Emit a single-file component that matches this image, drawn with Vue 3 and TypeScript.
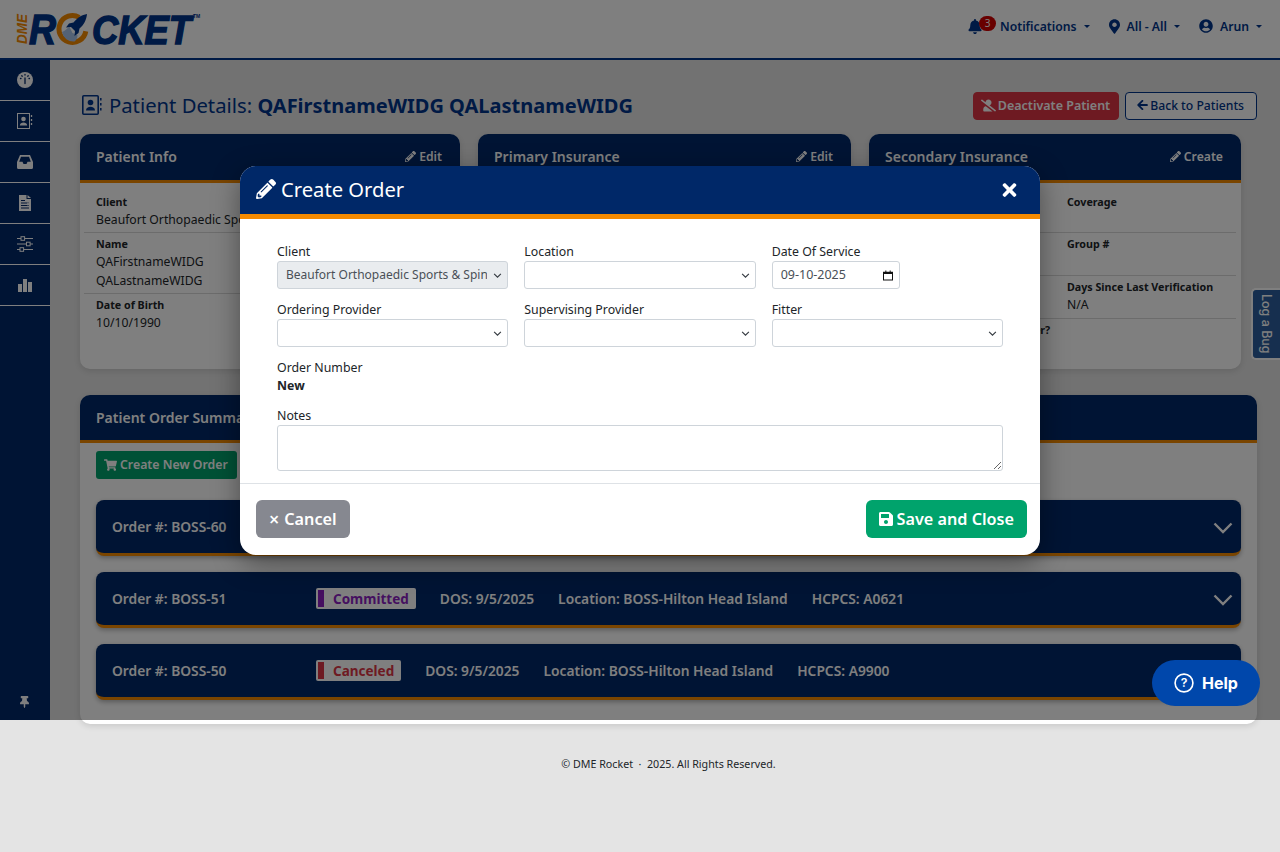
<script setup lang="ts">
const navIcons = ['gauge', 'contacts', 'inbox', 'file', 'sliders', 'bars']

const patientRows = [
  { label: 'Client', value: ['Beaufort Orthopaedic Sports & Spine'] },
  { label: 'Name', value: ['QAFirstnameWIDG', 'QALastnameWIDG'] },
  { label: 'Date of Birth', value: ['10/10/1990'] },
]

const secondaryRows = [
  { left: 'Payer', right: 'Coverage', value: '' },
  { left: 'Policy #', right: 'Group #', value: '' },
  { left: 'Last Verified', right: 'Days Since Last Verification', value: 'N/A' },
  { left: 'Is Medicare a Secondary Payer?', right: '', value: '' },
]

const orders = [
  { id: 'BOSS-60', status: 'Committed', tone: 'purple', hcpcs: 'A0621' },
  { id: 'BOSS-51', status: 'Committed', tone: 'purple', hcpcs: 'A0621' },
  { id: 'BOSS-50', status: 'Canceled', tone: 'red', hcpcs: 'A9900' },
]

const pencil = 'M497.9 142.1l-46.1 46.1c-4.7 4.7-12.3 4.7-17 0l-111-111c-4.7-4.7-4.7-12.3 0-17l46.1-46.1c18.7-18.7 49.1-18.7 67.9 0l60.1 60.1c18.8 18.7 18.8 49.1 0 67.9zM284.2 99.8L21.6 362.4.4 483.9c-2.9 16.4 11.4 30.6 27.8 27.8l121.5-21.3 262.6-262.6c4.7-4.7 4.7-12.3 0-17l-111-111c-4.8-4.7-12.4-4.7-17.1 0zM124.1 339.9c-5.5-5.5-5.5-14.3 0-19.8l154-154c5.5-5.5 14.3-5.5 19.8 0s5.5 14.3 0 19.8l-154 154c-5.5 5.5-14.3 5.5-19.8 0zM88 424h48v36.3l-64.5 11.3-31.1-31.1L51.7 376H88v48z'
const times = 'M242.72 256l100.07-100.07c12.28-12.28 12.28-32.19 0-44.48l-22.24-22.24c-12.28-12.28-32.19-12.28-44.48 0L176 189.28 75.93 89.21c-12.28-12.28-32.19-12.28-44.48 0L9.21 111.45c-12.28 12.28-12.28 32.19 0 44.48L109.28 256 9.21 356.07c-12.28 12.28-12.28 32.19 0 44.48l22.24 22.24c12.28 12.28 32.2 12.28 44.48 0L176 322.72l100.07 100.07c12.28 12.28 32.2 12.28 44.48 0l22.24-22.24c12.28-12.28 12.28-32.19 0-44.48L242.72 256z'
const floppy = 'M433.941 129.941l-83.882-83.882A48 48 0 0 0 316.118 32H48C21.49 32 0 53.49 0 80v352c0 26.51 21.49 48 48 48h352c26.51 0 48-21.49 48-48V163.882a48 48 0 0 0-14.059-33.941zM224 416c-35.346 0-64-28.654-64-64 0-35.346 28.654-64 64-64s64 28.654 64 64c0 35.346-28.654 64-64 64zm96-304.52V212c0 6.627-5.373 12-12 12H76c-6.627 0-12-5.373-12-12V108c0-6.627 5.373-12 12-12h228.52c3.183 0 6.235 1.264 8.485 3.515l3.48 3.48A11.996 11.996 0 0 1 320 111.48z'
</script>

<template>
  <div class="page">
    <header class="topbar">
      <svg class="logo" viewBox="0 0 186 36" width="186" height="36">
        <text class="logo-dme" transform="translate(13 33) rotate(-90)" textLength="30" lengthAdjust="spacingAndGlyphs">DME</text>
        <text class="logo-big" x="15" y="33" textLength="27" lengthAdjust="spacingAndGlyphs">R</text>
        <path d="M65.25 6.3A13.5 13.5 0 1 0 71.8 20.3" fill="none" stroke="#f58a00" stroke-width="5" />
        <path d="M48 21c3-1 5.500-4 7.500-5l3 6 5 2c0 3-1 5-3 6.500a11.500 11.500 0 0 1-12.500-9.500z" fill="#a9c4ea" />
        <path d="M73 3c-5 .8-10 4-13.500 8.500l-4.500 1-3 4 5-.5 4 4-.5 5 4-3 1-4.500C70 14 72.500 8.500 73 3z" fill="#00348a" />
        <text class="logo-cket" transform="translate(78 33) scale(1 1.14)">CKET</text>
        <text class="logo-tm" x="179" y="6.500">TM</text>
      </svg>

      <nav class="topnav">
        <a class="topnav-item">
          <span class="bell">
            <svg viewBox="0 0 448 512" width="14" height="15"><path fill="currentColor" d="M224 512c35.32 0 63.97-28.65 63.97-64H160.03c0 35.35 28.65 64 63.97 64zm215.39-149.71c-19.32-20.76-55.47-51.99-55.47-154.29 0-77.7-54.48-139.9-127.94-155.16V32c0-17.67-14.32-32-31.98-32s-31.98 14.33-31.98 32v20.84C118.56 68.1 64.08 130.3 64.08 208c0 102.3-36.15 133.53-55.47 154.29-6 6.45-8.66 14.16-8.61 21.71.11 16.4 12.98 32 32.1 32h383.8c19.12 0 32-15.6 32.1-32 .05-7.55-2.61-15.27-8.61-21.71z" /></svg>
            <span class="badge-count">3</span>
          </span>
          Notifications<i class="caret"></i>
        </a>
        <a class="topnav-item">
          <svg viewBox="0 0 384 512" width="11" height="15"><path fill="currentColor" d="M172.268 501.67C26.97 291.031 0 269.413 0 192 0 85.961 85.961 0 192 0s192 85.961 192 192c0 77.413-26.97 99.031-172.268 309.67-9.535 13.774-29.93 13.773-39.464 0zM192 272c44.183 0 80-35.817 80-80s-35.817-80-80-80-80 35.817-80 80 35.817 80 80 80z" /></svg>
          All - All<i class="caret"></i>
        </a>
        <a class="topnav-item">
          <svg viewBox="0 0 496 512" width="14" height="14"><path fill="currentColor" d="M248 8C111 8 0 119 0 256s111 248 248 248 248-111 248-248S385 8 248 8zm0 96c48.600 0 88 39.400 88 88s-39.400 88-88 88-88-39.400-88-88 39.400-88 88-88zm0 344c-58.700 0-111.300-26.600-146.500-68.200 18.800-35.400 55.600-59.800 98.500-59.800 2.400 0 4.800.4 7.100 1.100 13 4.200 26.600 6.900 40.900 6.900 14.300 0 28-2.700 40.900-6.900 2.300-.7 4.700-1.100 7.100-1.100 42.900 0 79.700 24.400 98.500 59.800C359.300 421.400 306.700 448 248 448z" /></svg>
          Arun<i class="caret"></i>
        </a>
      </nav>
    </header>

    <div class="shell">
      <aside class="sidebar">
        <div v-for="icon in navIcons" :key="icon" class="nav-cell">
          <svg v-if="icon === 'gauge'" viewBox="0 0 16 16" width="16" height="16">
            <circle cx="8" cy="8" r="8" fill="#fff" />
            <g stroke="#002868" stroke-width="1.300" stroke-linecap="round">
              <path d="M8 2.500v.6M3.500 6.500h.5M12 6.500h.5M4.800 3.800l.4.4M11.200 3.800l-.4.4M8 6l0 5.500" />
            </g>
          </svg>
          <svg v-else-if="icon === 'contacts'" viewBox="0 0 16 16" width="16" height="16">
            <rect x=".5" y=".5" width="12" height="15" fill="none" stroke="#fff" />
            <circle cx="6.500" cy="6" r="2.300" fill="#fff" />
            <path d="M2.800 12.500c0-4 7.400-4 7.400 0z" fill="#fff" />
            <path d="M14.500 2v2M14.500 6v2M14.500 10v2" stroke="#fff" stroke-width="1.300" />
          </svg>
          <svg v-else-if="icon === 'inbox'" viewBox="0 0 16 14" width="16" height="14">
            <path fill="#fff" fill-rule="evenodd" d="M3 0h10l3 7v5.500a1.500 1.500 0 0 1-1.500 1.500h-13A1.500 1.500 0 0 1 0 12.500V7zM4 1.800L2.200 6.800h3.300l1 2.200h3l1-2.200h3.300L12 1.800z" />
          </svg>
          <svg v-else-if="icon === 'file'" viewBox="0 0 12 16" width="12" height="16">
            <path d="M0 0h7.500v4H12v12H0z" fill="#fff" />
            <path d="M8.500 0L12 3H8.500z" fill="#fff" />
            <path d="M2 5.500h4M2 8h8M2 10.500h8M2 13h8" stroke="#002868" stroke-width="1" fill="none" />
            <path d="M9 7.500v3" stroke="#fff" stroke-width="1.500" />
          </svg>
          <svg v-else-if="icon === 'sliders'" viewBox="0 0 16 16" width="16" height="16">
            <path d="M0 2.500h16M0 8h16M0 13.500h16" stroke="#fff" stroke-width="1.200" />
            <rect x="4" y=".7" width="3.600" height="3.600" fill="#002868" stroke="#fff" />
            <rect x="9.500" y="6.200" width="3.600" height="3.600" fill="#002868" stroke="#fff" />
            <rect x="3" y="11.700" width="3.600" height="3.600" fill="#002868" stroke="#fff" />
          </svg>
          <svg v-else viewBox="0 0 14 14" width="14" height="14">
            <path d="M0 6h4v8H0zM5 1h4v13H5zM10 4h4v10h-4z" fill="#fff" />
          </svg>
        </div>
        <div class="pin">
          <svg viewBox="0 0 384 512" width="9" height="12"><path fill="#fff" d="M298.028 214.267L285.793 96H328c13.255 0 24-10.745 24-24V24c0-13.255-10.745-24-24-24H56C42.745 0 32 10.745 32 24v48c0 13.255 10.745 24 24 24h42.207L85.972 214.267C37.465 236.82 0 277.261 0 328c0 13.255 10.745 24 24 24h136v104.007c0 1.242.289 2.467.845 3.578l24 48c2.941 5.882 11.364 5.893 14.311 0l24-48a8.008 8.008 0 0 0 .845-3.578V352h136c13.255 0 24-10.745 24-24-.001-51.183-37.983-91.420-85.973-113.733z" /></svg>
        </div>
      </aside>

      <main class="content">
        <div class="title-row">
          <h1 class="title">
            <svg class="title-icon" viewBox="0 0 20 20" width="20" height="20">
              <rect x=".8" y=".8" width="15.400" height="18.400" rx="1" fill="none" stroke="#00348a" stroke-width="1.600" />
              <circle cx="8.500" cy="7.500" r="2.800" fill="#00348a" />
              <path d="M4 15.500c0-5 9-5 9 0z" fill="#00348a" />
              <path d="M18.800 3v2.500M18.800 8v2.500M18.800 13v2.500" stroke="#00348a" stroke-width="1.500" />
            </svg>
            <span>Patient Details: <b>QAFirstnameWIDG QALastnameWIDG</b></span>
          </h1>
          <div class="title-actions">
            <button class="btn-deactivate">
              <svg viewBox="0 0 640 512" width="15" height="13"><path fill="currentColor" d="M633.8 458.100L362.300 248.300C412.100 230.700 448 183.800 448 128 448 57.300 390.700 0 320 0c-67.100 0-121.500 51.800-126.900 117.400L45.500 3.400C38.500-2 28.500-.8 23 6.200L3.400 31.400c-5.400 7-4.200 17 2.800 22.400l588.400 454.700c7 5.400 17 4.200 22.500-2.800l19.600-25.300c5.400-6.800 4.100-16.900-2.900-22.300zM96 422.400V464c0 26.500 21.500 48 48 48h350.200L207.400 290.300C144.200 301.300 96 356 96 422.400z" /></svg>
              <span>Deactivate Patient</span>
            </button>
            <button class="btn-back">
              <svg viewBox="0 0 448 512" width="11" height="12"><path fill="currentColor" d="M257.500 445.100l-22.200 22.200c-9.400 9.400-24.600 9.400-33.900 0L7 273c-9.400-9.400-9.400-24.600 0-33.900L201.400 44.700c9.400-9.400 24.600-9.400 33.900 0l22.200 22.200c9.500 9.500 9.300 25-.4 34.300L136.600 216H424c13.300 0 24 10.700 24 24v32c0 13.300-10.700 24-24 24H136.600l120.500 114.800c9.800 9.300 10 24.800.4 34.300z" /></svg>
              <span>Back to Patients</span>
            </button>
          </div>
        </div>

        <div class="cards">
          <section class="card">
            <div class="card-head">
              <span>Patient Info</span>
              <a class="card-link"><svg viewBox="0 0 512 512" width="11" height="11"><path fill="currentColor" :d="pencil" /></svg>Edit</a>
            </div>
            <div class="card-body">
              <div v-for="row in patientRows" :key="row.label" class="info-row">
                <div class="info-label">{{ row.label }}</div>
                <div v-for="line in row.value" :key="line" class="info-value">{{ line }}</div>
              </div>
            </div>
          </section>

          <section class="card">
            <div class="card-head">
              <span>Primary Insurance</span>
              <a class="card-link"><svg viewBox="0 0 512 512" width="11" height="11"><path fill="currentColor" :d="pencil" /></svg>Edit</a>
            </div>
          </section>

          <section class="card">
            <div class="card-head">
              <span>Secondary Insurance</span>
              <a class="card-link"><svg viewBox="0 0 512 512" width="11" height="11"><path fill="currentColor" :d="pencil" /></svg>Create</a>
            </div>
            <div class="card-body">
              <div v-for="row in secondaryRows" :key="row.left" class="info-row split">
                <div class="info-label left-label">{{ row.left }}</div>
                <div>
                  <div class="info-label">{{ row.right }}</div>
                  <div class="info-value">{{ row.value }}</div>
                </div>
              </div>
            </div>
          </section>
        </div>

        <section class="summary">
          <div class="card-head summary-head">
            <span>Patient Order Summary</span>
          </div>
          <div class="summary-body">
            <button class="btn-create">
              <svg viewBox="0 0 576 512" width="13" height="12"><path fill="currentColor" d="M528.120 301.319l47.273-208C578.806 78.301 567.391 64 551.990 64H159.208l-9.166-44.810C147.758 8.021 137.930 0 126.529 0H24C10.745 0 0 10.745 0 24v16c0 13.255 10.745 24 24 24h69.883l70.248 343.435C147.325 417.100 136 435.222 136 456c0 30.928 25.072 56 56 56s56-25.072 56-56c0-15.674-6.447-29.835-16.824-40h209.647C430.447 426.165 424 440.326 424 456c0 30.928 25.072 56 56 56s56-25.072 56-56c0-22.172-12.888-41.332-31.579-50.405l5.517-24.276c3.413-15.018-8.002-29.319-23.403-29.319H218.117l-6.545-32h293.145c11.206 0 20.920-7.754 23.403-18.681z" /></svg>
              <span>Create New Order</span>
            </button>
            <div class="orders">
              <div v-for="order in orders" :key="order.id" class="order">
                <span class="order-id">Order #: {{ order.id }}</span>
                <span class="status" :class="order.tone"><i></i>{{ order.status }}</span>
                <span>DOS: 9/5/2025</span>
                <span>Location: BOSS-Hilton Head Island</span>
                <span>HCPCS: {{ order.hcpcs }}</span>
                <svg class="chevron" viewBox="0 0 20 12" width="20" height="12"><path d="M1.500 1.500L10 10l8.500-8.500" fill="none" stroke="#fff" stroke-width="2.400" /></svg>
              </div>
            </div>
          </div>
        </section>

        <footer class="footer">© DME Rocket &nbsp;·&nbsp; 2025. All Rights Reserved.</footer>
      </main>
    </div>

    <div class="bug-tab">Log a Bug</div>

    <div class="backdrop">
      <div class="modal">
        <div class="modal-head">
          <svg viewBox="0 0 512 512" width="20" height="20"><path fill="#fff" :d="pencil" /></svg>
          <h2>Create Order</h2>
          <svg class="modal-close" viewBox="0 0 352 512" width="15" height="20"><path fill="#fff" :d="times" /></svg>
        </div>

        <div class="modal-body">
          <div class="form-grid">
            <label class="field">
              <span>Client</span>
              <select class="control locked">
                <option>Beaufort Orthopaedic Sports &amp; Spine</option>
              </select>
            </label>
            <label class="field">
              <span>Location</span>
              <select class="control"></select>
            </label>
            <div class="field">
              <span>Date Of Service</span>
              <div class="date-control">
                <span>09-10-2025</span>
                <svg viewBox="0 0 12 12" width="10" height="11">
                  <path d="M0 1.500h12V12H0z" fill="#111" />
                  <path d="M1.200 4.200h9.600v6.600H1.200z" fill="#fff" />
                  <path d="M2.800 0h1.200v2H2.800zM8 0h1.200v2H8z" fill="#111" />
                </svg>
              </div>
            </div>
            <label class="field">
              <span>Ordering Provider</span>
              <select class="control"></select>
            </label>
            <label class="field">
              <span>Supervising Provider</span>
              <select class="control"></select>
            </label>
            <label class="field">
              <span>Fitter</span>
              <select class="control"></select>
            </label>
          </div>

          <div class="order-number">
            <span>Order Number</span>
            <b>New</b>
          </div>

          <label class="field">
            <span>Notes</span>
            <textarea class="notes"></textarea>
          </label>
        </div>

        <div class="modal-foot">
          <button class="btn-cancel"><span class="cancel-x">×</span> <span>Cancel</span></button>
          <button class="btn-save">
            <svg viewBox="0 0 448 512" width="14" height="16"><path fill="currentColor" :d="floppy" /></svg>
            <span>Save and Close</span>
          </button>
        </div>
      </div>
    </div>

    <button class="help">
      <svg viewBox="0 0 22 22" width="20" height="20">
        <circle cx="11" cy="11" r="9.800" fill="none" stroke="#fff" stroke-width="1.800" />
        <text x="11" y="15.800" text-anchor="middle" class="help-mark">?</text>
      </svg>
      <span>Help</span>
    </button>
  </div>
</template>

<style>
html,
body {
  margin: 0;
  background: #e4e4e4;
}
</style>

<style scoped>
.page {
  position: relative;
  width: 1280px;
  height: 852px;
  overflow: hidden;
  background: #e4e4e4;
  font-family: 'Noto Sans', 'Open Sans', sans-serif;
  color: #212529;
}

button {
  font-family: inherit;
  cursor: pointer;
}

.topbar {
  height: 58px;
  display: flex;
  align-items: center;
  justify-content: space-between;
  padding: 0 18px 0 14px;
  background: #fff;
  border-bottom: 2px solid #00348a;
}

.logo {
  margin-top: -1px;
  overflow: visible;
}

.logo-dme {
  font: italic 700 14px 'Liberation Sans', sans-serif;
  fill: #f58a00;
}

.logo-big {
  font: italic 700 42px 'Liberation Sans', sans-serif;
  fill: #00348a;
  stroke: #00348a;
  stroke-width: 1.400;
}

.logo-cket {
  font: italic 700 36.400px 'Liberation Sans', sans-serif;
  fill: #00348a;
  stroke: #00348a;
  stroke-width: 1.300;
}

.logo-tm {
  font: 700 5px 'Liberation Sans', sans-serif;
  fill: #00348a;
}

.topnav {
  display: flex;
  align-items: center;
  gap: 19px;
  padding-bottom: 6px;
}

.topnav-item {
  display: flex;
  align-items: center;
  gap: 7px;
  color: #00348a;
  font-size: 12.200px;
  font-weight: 600;
}

.bell {
  position: relative;
  display: flex;
  width: 25px;
}

.badge-count {
  position: absolute;
  left: 11px;
  top: -3px;
  width: 17px;
  height: 15px;
  border-radius: 8px;
  background: #d00000;
  color: #fff;
  font-size: 10px;
  font-weight: 400;
  line-height: 15px;
  text-align: center;
}

.caret {
  width: 0;
  height: 0;
  border-left: 3px solid transparent;
  border-right: 3px solid transparent;
  border-top: 3px solid #00348a;
}

.shell {
  display: flex;
  align-items: flex-start;
}

.sidebar {
  position: relative;
  flex: none;
  width: 50px;
  height: 660px;
  background: #002868;
}

.nav-cell {
  height: 40px;
  display: flex;
  align-items: center;
  justify-content: center;
  border-bottom: 1px solid #fff;
}

.pin {
  position: absolute;
  left: 20px;
  top: 631px;
}

.content {
  flex: 1;
  min-width: 0;
  padding: 32px 23px 0 30px;
}

.title-row {
  height: 28px;
  display: flex;
  align-items: center;
  justify-content: space-between;
  margin-bottom: 14px;
}

.title {
  display: flex;
  align-items: center;
  gap: 6px;
  margin: -3px 0 0;
  font-size: 20.250px;
  font-weight: 400;
  color: #00348a;
  white-space: pre;
}

.title b {
  font-size: 20px;
}

.title-icon {
  margin-left: 2px;
  margin-right: 1px;
}

.title-actions {
  display: flex;
  gap: 6px;
}

.btn-deactivate,
.btn-back {
  height: 28px;
  display: flex;
  align-items: center;
  gap: 2px;
  padding: 0 8px 2px;
  border-radius: 4px;
  font-size: 12.500px;
}

.btn-back {
  padding: 0 12px 2px 11px;
  border: 1px solid #00348a;
  background: #fff;
  color: #00348a;
  font-size: 12.200px;
  font-weight: 500;
}

.btn-deactivate {
  padding-left: 7px;
  border: 1px solid #dc3545;
  background: #dc3545;
  color: #fff;
  font-weight: 600;
}

.cards {
  display: grid;
  grid-template-columns: 380px 373px 372px;
  gap: 18px;
  margin-bottom: 26px;
}

.card {
  height: 235px;
  border-radius: 10px;
  background: #fff;
  box-shadow: 0 2px 6px rgba(0, 0, 0, 0.12);
  overflow: hidden;
}

.card-head {
  height: 44px;
  display: flex;
  align-items: center;
  justify-content: space-between;
  padding: 0 18px 2px 16px;
  background: #002868;
  border-bottom: 3px solid #f58a00;
  color: #fff;
  font-size: 14px;
  font-weight: 600;
}

.summary-head {
  height: 45px;
  padding-bottom: 0;
}

.card-link {
  display: flex;
  align-items: center;
  gap: 3px;
  font-size: 12.200px;
}

.card-body {
  padding: 8px 5px 0 4px;
}

.info-row {
  padding: 3px 12px;
  border-bottom: 1px solid #d8d8d8;
  font-size: 12.200px;
  line-height: 19px;
}

.info-row:last-child {
  border-bottom: 0;
}

.info-row.split {
  display: grid;
  grid-template-columns: 182px 1fr;
  min-height: 36px;
}

.info-row.split:first-child {
  min-height: 35px;
}

.info-row.split .info-label {
  white-space: nowrap;
}

.left-label {
  margin-left: -2px;
}

.info-label {
  font-size: 10.700px;
  font-weight: 700;
  line-height: 16px;
}

.info-value {
  min-height: 19px;
}

.summary {
  height: 329px;
  border-radius: 10px;
  background: #fff;
  box-shadow: 0 2px 6px rgba(0, 0, 0, 0.12);
  overflow: hidden;
}

.summary-body {
  padding: 8px 16px 0;
}

.btn-create {
  height: 28px;
  display: flex;
  align-items: center;
  gap: 3px;
  padding: 0 9px 1px 8px;
  border: 0;
  border-radius: 3px;
  background: #00a36c;
  color: #fff;
  font-size: 12.300px;
  font-weight: 600;
}

.orders {
  display: flex;
  flex-direction: column;
  gap: 16px;
  margin-top: 21px;
}

.order {
  position: relative;
  height: 53px;
  display: flex;
  align-items: center;
  gap: 24px;
  padding-left: 16px;
  border-bottom: 3px solid #f58a00;
  border-radius: 8px;
  background: #002868;
  box-shadow: 0 2px 5px rgba(0, 0, 0, 0.3);
  color: #fff;
  font-size: 13.800px;
  font-weight: 600;
}

.order-id {
  width: 180px;
}

.status {
  display: flex;
  align-items: center;
  gap: 9px;
  height: 21px;
  padding: 0 7px 0 2px;
  border-radius: 2px;
  background: #fff;
  font-size: 13.500px;
  font-weight: 700;
}

.status i {
  width: 6px;
  height: 17px;
}

.status.purple {
  color: #8a1fc0;
}

.status.purple i {
  background: #8a1fc0;
}

.status.red {
  color: #dc3545;
}

.status.red i {
  background: #dc3545;
}

.chevron {
  position: absolute;
  right: 8px;
  top: 22px;
}

.footer {
  margin-top: 33px;
  font-size: 10.700px;
  line-height: 15px;
  text-align: center;
  color: #212529;
}

.bug-tab {
  position: absolute;
  right: 0;
  top: 288px;
  width: 29px;
  height: 72px;
  box-sizing: border-box;
  display: flex;
  align-items: center;
  justify-content: center;
  writing-mode: vertical-rl;
  border: 2px solid #fff;
  border-right: 0;
  border-radius: 5px 0 0 5px;
  background: #2c5f9e;
  color: #fff;
  font-family: Inter, sans-serif;
  font-size: 12.500px;
  font-weight: 500;
}

.backdrop {
  position: absolute;
  left: 0;
  top: 0;
  width: 100%;
  height: 720px;
  padding-top: 166px;
  box-sizing: border-box;
  background: rgba(0, 0, 0, 0.5);
}

.modal {
  width: 800px;
  height: 389px;
  margin: 0 auto;
  border-radius: 16px;
  background: #fff;
  box-shadow: 0 8px 28px rgba(0, 0, 0, 0.4);
  overflow: hidden;
}

.modal-head {
  height: 46px;
  display: flex;
  align-items: center;
  gap: 5px;
  padding: 0 23px 2px 16px;
  background: #002868;
  border-bottom: 5px solid #f58a00;
}

.modal-head h2 {
  flex: 1;
  margin: 0;
  color: #fff;
  font-size: 20.200px;
  font-weight: 400;
}

.modal-close {
  margin-top: 1px;
}

.modal-body {
  height: 264px;
  padding: 24px 37px 0;
  box-sizing: border-box;
}

.form-grid {
  display: grid;
  grid-template-columns: repeat(3, 1fr);
  column-gap: 16px;
  row-gap: 12px;
}

.field {
  display: block;
  min-width: 0;
  font-size: 12.350px;
  line-height: 18px;
  color: #212529;
}

.field > span {
  display: block;
}

.control {
  display: block;
  width: 100%;
  height: 28px;
  padding: 0 20px 2px 8px;
  box-sizing: border-box;
  border: 1px solid #ced4da;
  border-radius: 3px;
  appearance: none;
  background: #fff url("data:image/svg+xml,%3Csvg xmlns='http://www.w3.org/2000/svg' viewBox='0 0 16 16'%3E%3Cpath fill='none' stroke='%23343a40' stroke-width='2' d='M2 5l6 6 6-6'/%3E%3C/svg%3E") no-repeat right 5px center / 9px 9px;
  color: #495057;
  font-family: inherit;
  font-size: 12px;
}

.control.locked {
  background-color: #e9ecef;
}

.date-control {
  width: 128px;
  height: 28px;
  display: flex;
  align-items: center;
  justify-content: space-between;
  padding: 0 6px 0 8px;
  box-sizing: border-box;
  border: 1px solid #ced4da;
  border-radius: 3px;
  color: #495057;
  font-size: 12.500px;
}

.order-number {
  display: flex;
  flex-direction: column;
  margin: 12px 0;
  font-size: 12.350px;
  line-height: 18px;
}

.notes {
  display: block;
  width: 100%;
  height: 46px;
  box-sizing: border-box;
  border: 1px solid #ced4da;
  border-radius: 3px;
  resize: vertical;
}

.modal-foot {
  height: 72px;
  display: flex;
  align-items: center;
  justify-content: space-between;
  padding: 0 13px 1px 16px;
  border-top: 1px solid #dee2e6;
  box-sizing: border-box;
}

.btn-cancel,
.btn-save {
  height: 38px;
  display: flex;
  align-items: center;
  gap: 4px;
  padding: 0 13px;
  border: 0;
  border-radius: 6px;
  color: #fff;
  font-size: 16.200px;
  font-weight: 600;
}

.btn-cancel {
  gap: 5px;
  background: #868890;
}

.cancel-x {
  font-size: 18px;
}

.btn-save {
  background: #00a36c;
}

.help {
  position: absolute;
  left: 1152px;
  top: 660px;
  width: 108px;
  height: 46px;
  display: flex;
  align-items: center;
  justify-content: center;
  gap: 8px;
  border: 0;
  border-radius: 23px;
  background: #0047ab;
  color: #fff;
  font-family: Inter, sans-serif;
  font-size: 16px;
  font-weight: 700;
}

.help-mark {
  font: 600 13.500px Inter, sans-serif;
  fill: #fff;
}
</style>
